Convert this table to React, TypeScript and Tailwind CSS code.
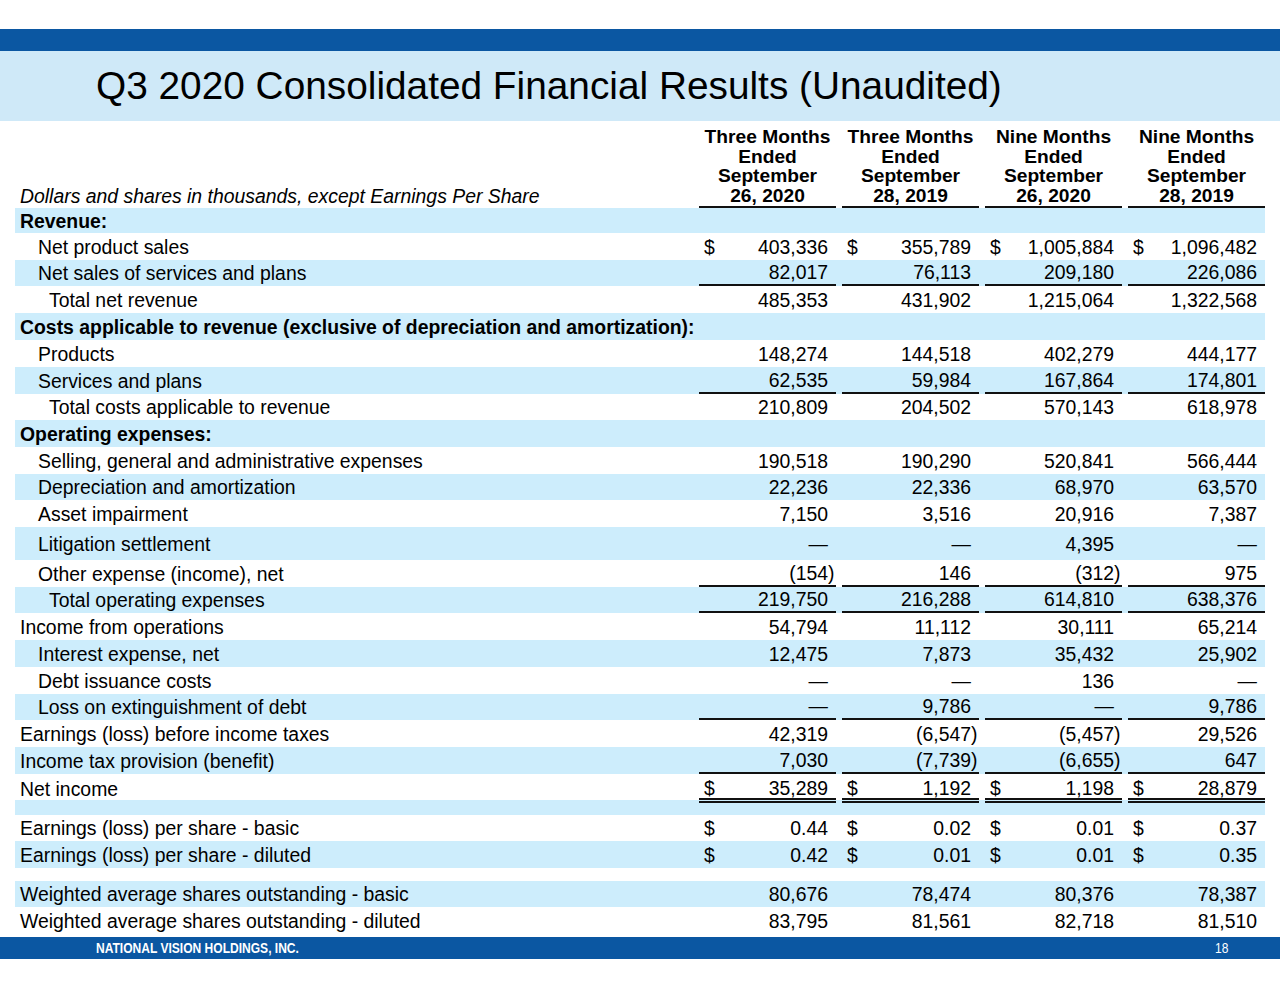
import React from "react";

type Row = {
  label?: string;
  indent?: 0 | 1 | 2;
  bold?: boolean;
  shaded?: boolean;
  h: number;
  vals?: string[];
  dollar?: boolean;
  border?: "single" | "double";
};

const rows: Row[] = [
  { label: "Revenue:", bold: true, shaded: true, h: 25 },
  { label: "Net product sales", indent: 1, h: 27, dollar: true, vals: ["403,336", "355,789", "1,005,884", "1,096,482"] },
  { label: "Net sales of services and plans", indent: 1, shaded: true, h: 26, border: "single", vals: ["82,017", "76,113", "209,180", "226,086"] },
  { label: "Total net revenue", indent: 2, h: 27, vals: ["485,353", "431,902", "1,215,064", "1,322,568"] },
  { label: "Costs applicable to revenue (exclusive of depreciation and amortization):", bold: true, shaded: true, h: 27 },
  { label: "Products", indent: 1, h: 27, vals: ["148,274", "144,518", "402,279", "444,177"] },
  { label: "Services and plans", indent: 1, shaded: true, h: 27, border: "single", vals: ["62,535", "59,984", "167,864", "174,801"] },
  { label: "Total costs applicable to revenue", indent: 2, h: 26, vals: ["210,809", "204,502", "570,143", "618,978"] },
  { label: "Operating expenses:", bold: true, shaded: true, h: 27 },
  { label: "Selling, general and administrative expenses", indent: 1, h: 27, vals: ["190,518", "190,290", "520,841", "566,444"] },
  { label: "Depreciation and amortization", indent: 1, shaded: true, h: 26, vals: ["22,236", "22,336", "68,970", "63,570"] },
  { label: "Asset impairment", indent: 1, h: 27, vals: ["7,150", "3,516", "20,916", "7,387"] },
  { label: "Litigation settlement", indent: 1, shaded: true, h: 33, vals: ["—", "—", "4,395", "—"] },
  { label: "Other expense (income), net", indent: 1, h: 27, border: "single", vals: ["(154)", "146", "(312)", "975"] },
  { label: "Total operating expenses", indent: 2, shaded: true, h: 26, border: "single", vals: ["219,750", "216,288", "614,810", "638,376"] },
  { label: "Income from operations", indent: 0, h: 27, vals: ["54,794", "11,112", "30,111", "65,214"] },
  { label: "Interest expense, net", indent: 1, shaded: true, h: 27, vals: ["12,475", "7,873", "35,432", "25,902"] },
  { label: "Debt issuance costs", indent: 1, h: 27, vals: ["—", "—", "136", "—"] },
  { label: "Loss on extinguishment of debt", indent: 1, shaded: true, h: 26, border: "single", vals: ["—", "9,786", "—", "9,786"] },
  { label: "Earnings (loss) before income taxes", indent: 0, h: 27, vals: ["42,319", "(6,547)", "(5,457)", "29,526"] },
  { label: "Income tax provision (benefit)", indent: 0, shaded: true, h: 27, border: "single", vals: ["7,030", "(7,739)", "(6,655)", "647"] },
  { label: "Net income", indent: 0, h: 26, dollar: true, border: "double", vals: ["35,289", "1,192", "1,198", "28,879"] },
  { shaded: true, h: 15 },
  { label: "Earnings (loss) per share - basic", indent: 0, h: 26, dollar: true, vals: ["0.44", "0.02", "0.01", "0.37"] },
  { label: "Earnings (loss) per share - diluted", indent: 0, shaded: true, h: 27, dollar: true, vals: ["0.42", "0.01", "0.01", "0.35"] },
  { h: 13 },
  { label: "Weighted average shares outstanding - basic", indent: 0, shaded: true, h: 26, vals: ["80,676", "78,474", "80,376", "78,387"] },
  { label: "Weighted average shares outstanding - diluted", indent: 0, h: 27, vals: ["83,795", "81,561", "82,718", "81,510"] },
];

const heightCls: Record<number, string> = {
  13: "h-[13px]",
  15: "h-[15px]",
  25: "h-[25px]",
  26: "h-[26px]",
  27: "h-[27px]",
  33: "h-[33px]",
};

const indentCls: Record<number, string> = {
  0: "pl-[5px]",
  1: "pl-[23px]",
  2: "pl-[34px]",
};

const headers = [
  ["Three Months", "Ended", "September", "26, 2020"],
  ["Three Months", "Ended", "September", "28, 2019"],
  ["Nine Months", "Ended", "September", "26, 2020"],
  ["Nine Months", "Ended", "September", "28, 2019"],
];

function Value({ v }: { v: string }) {
  if (v.startsWith("(") && v.endsWith(")")) {
    return (
      <span className="whitespace-nowrap">
        {v.slice(0, -1)}
        <span className="inline-block w-0">)</span>
      </span>
    );
  }
  return <span className="whitespace-nowrap">{v}</span>;
}

function DataRow({ r }: { r: Row }) {
  const borderCls =
    r.border === "single"
      ? "border-b-2 border-[#111]"
      : r.border === "double"
      ? "border-b-[5px] border-double border-[#111] pt-[4px]"
      : "";
  return (
    <div
      className={`grid grid-cols-[681px_143px_143px_143px_143px] ${heightCls[r.h]} ${
        r.shaded ? "bg-[#cdedfc]" : ""
      }`}
    >
      <div
        className={`flex items-center whitespace-nowrap ${indentCls[r.indent ?? 0]} ${
          r.bold ? "font-bold" : ""
        }`}
      >
        {r.label ?? ""}
      </div>
      {[0, 1, 2, 3].map((i) => (
        <div key={i} className="px-[3px] h-full">
          <div
            className={`h-full flex items-center justify-between pl-[5px] pr-[8px] ${
              r.vals ? borderCls : ""
            }`}
          >
            <span>{r.dollar && r.vals ? "$" : ""}</span>
            {r.vals ? <Value v={r.vals[i]} /> : null}
          </div>
        </div>
      ))}
    </div>
  );
}

export default function App() {
  return (
    <div className="w-[1280px] h-[989px] bg-white font-['Liberation_Sans',Arial,sans-serif] text-black overflow-hidden">
      <div className="h-[29px] bg-white" />
      <div className="h-[22px] bg-[#0b57a2]" />
      <div className="h-[70px] bg-[#cfe9f8] flex items-center pl-[96px]">
        <h1 className="text-[38.8px] leading-none text-black">
          Q3 2020 Consolidated Financial Results (Unaudited)
        </h1>
      </div>
      <div className="mx-[15px] text-[19.4px] leading-[20px]">
        <div className="grid grid-cols-[681px_143px_143px_143px_143px] h-[87px]">
          <div className="flex items-end pl-[5px] pb-[2px] italic whitespace-nowrap">
            Dollars and shares in thousands, except Earnings Per Share
          </div>
          {headers.map((h, i) => (
            <div key={i} className="px-[3px] h-full">
              <div className="h-full flex flex-col items-center justify-end pb-[1px] border-b-2 border-[#111] font-bold text-[19.2px] leading-[19.4px] text-center">
                {h.map((line, j) => (
                  <div key={j} className="whitespace-nowrap">
                    {line}
                  </div>
                ))}
              </div>
            </div>
          ))}
        </div>
        {rows.map((r, i) => (
          <DataRow key={i} r={r} />
        ))}
      </div>
      <div className="h-[3px]" />
      <div className="h-[22px] bg-[#0b57a2] flex items-center text-white">
        <div className="pl-[96px] w-[1100px]">
          <span className="inline-block origin-left scale-x-[0.86] text-[14px] font-bold leading-none whitespace-nowrap">
            NATIONAL VISION HOLDINGS, INC.
          </span>
        </div>
        <div className="pl-[115px]">
          <span className="inline-block origin-left scale-x-[0.8] text-[15px] leading-none">18</span>
        </div>
      </div>
    </div>
  );
}
